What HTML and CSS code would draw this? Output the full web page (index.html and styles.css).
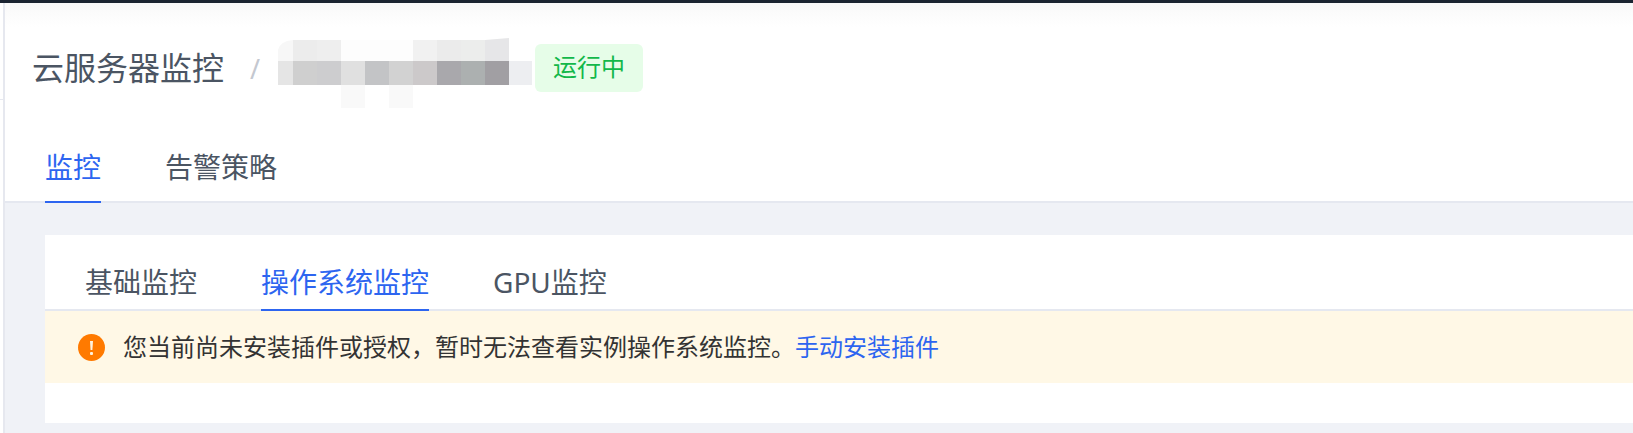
FILE: index.html
```html
<!DOCTYPE html>
<html lang="zh-CN">
<head>
    <meta charset="UTF-8">
    <title>云服务器监控</title>
    <link rel="stylesheet" href="styles.css">
</head>
<body>
    <div class="topbar"></div>
    <div class="layout">
        <div class="sidebar"><div class="sidebar-line"></div></div>
        <div class="main">
            <div class="header">
                <div class="title-row">
                    <span class="title">云服务器监控</span>
                    <span class="slash">/</span>
                    <!-- blurred instance name -->
                    <svg class="mosaic" width="254" height="70" viewBox="0 0 254 70">
                        <path d="M0 23V12Q2 3 15 2V23Z" fill="#f7f7f7"/>
                        <rect x="15" y="2" width="24" height="21" fill="#ececec"/>
                        <rect x="39" y="2" width="24" height="21" fill="#eeeeee"/>
                        <rect x="63" y="2" width="72" height="21" fill="#fdfdfd"/>
                        <rect x="135" y="2" width="24" height="21" fill="#f1f1f1"/>
                        <rect x="159" y="2" width="24" height="21" fill="#ebebeb"/>
                        <rect x="183" y="2" width="24" height="21" fill="#ecedec"/>
                        <path d="M207 2L231 0V23H207Z" fill="#e6e6e8"/>
                        <rect x="0" y="23" width="15" height="24" fill="#e5e5e5"/>
                        <rect x="15" y="23" width="24" height="24" fill="#cfcfcf"/>
                        <rect x="39" y="23" width="24" height="24" fill="#cdcdcf"/>
                        <rect x="63" y="23" width="24" height="24" fill="#e0e0e0"/>
                        <rect x="87" y="23" width="24" height="24" fill="#c3c4c6"/>
                        <rect x="111" y="23" width="24" height="24" fill="#d2d2d2"/>
                        <rect x="135" y="23" width="24" height="24" fill="#ccc9ca"/>
                        <rect x="159" y="23" width="24" height="24" fill="#a9a8ac"/>
                        <rect x="183" y="23" width="24" height="24" fill="#acb0b0"/>
                        <rect x="207" y="23" width="24" height="24" fill="#a19fa3"/>
                        <rect x="231" y="23" width="23" height="24" fill="#edeef1"/>
                        <rect x="63" y="47" width="24" height="23" fill="#f9f9f9"/>
                        <rect x="111" y="47" width="24" height="23" fill="#f9f9f9"/>
                    </svg>
                    <span class="badge">运行中</span>
                </div>
                <div class="tabs page-tabs">
                    <a class="tab active">监控</a>
                    <a class="tab">告警策略</a>
                </div>
            </div>
            <div class="content">
                <div class="card">
                    <div class="tabs card-tabs">
                        <a class="tab">基础监控</a>
                        <a class="tab active">操作系统监控</a>
                        <a class="tab">GPU监控</a>
                    </div>
                    <div class="alert">
                        <svg class="alert-icon" width="27" height="27" viewBox="0 0 27 27">
                            <circle cx="13.5" cy="13.5" r="13.5" fill="#ff7a00"/>
                            <path d="M12 7H15L14.4 16H12.6Z" fill="#fff3e0"/>
                            <rect x="12" y="18" width="3" height="3" rx="1" fill="#fff3e0"/>
                        </svg>
                        <span class="alert-text">您当前尚未安装插件或授权，暂时无法查看实例操作系统监控。<a class="link">手动安装插件</a></span>
                    </div>
                </div>
            </div>
        </div>
    </div>
</body>
</html>
```

FILE: styles.css
```css
* {
    box-sizing: border-box;
}

html, body {
    height: 100%;
}

body {
    margin: 0;
    display: flex;
    flex-direction: column;
    overflow: hidden;
    background-color: #fff;
    font-family: "Noto Sans", "Noto Sans CJK SC", sans-serif;
}

.topbar {
    height: 3px;
    background-color: #1b2431;
}

.layout {
    flex: 1;
    display: flex;
}

.sidebar {
    width: 5px;
    border-right: 2px solid #e6e8ef;
    padding-top: 96px;
}

.sidebar-line {
    height: 1px;
    background-color: #e6e8ef;
}

.main {
    flex: 1;
    display: flex;
    flex-direction: column;
    background-color: #f0f2f7;
}

.header {
    height: 200px;
    background: linear-gradient(#f9f9f9, #fff 24px);
    border-bottom: 2px solid #e5e8f0;
}

.title-row {
    display: flex;
    align-items: center;
    height: 48px;
    margin-top: 41px;
    padding-left: 27px;
}

.title {
    font-size: 32px;
    line-height: 48px;
    color: #4b5563;
}

.slash {
    margin-left: 25px;
    width: 29px;
    padding-left: 1px;
    font-size: 27px;
    color: #c4c8d0;
}

.mosaic {
    flex-shrink: 0;
    margin-top: 10px;
}

.badge {
    margin-left: 3px;
    width: 108px;
    height: 48px;
    border-radius: 6px;
    background-color: #e6fde8;
    color: #12b84a;
    font-size: 24px;
    line-height: 46px;
    text-align: center;
}

.tabs {
    display: flex;
}

.tab {
    display: block;
    height: 100%;
    font-size: 28px;
    color: #4b5563;
    white-space: nowrap;
}

.tab.active {
    color: #2d65f0;
    border-bottom: 2px solid #2d65f0;
}

.page-tabs {
    gap: 64px;
    height: 61px;
    margin-top: 50px;
    margin-bottom: -2px;
    padding-left: 40px;
    position: relative;
}

.page-tabs .tab {
    line-height: 51px;
}

.content {
    flex: 1;
    padding: 32px 0 10px 40px;
}

.card {
    height: 188px;
    background-color: #fff;
}

.card-tabs {
    gap: 64px;
    height: 76px;
    padding-left: 40px;
    border-bottom: 2px solid #e5e8f0;
}

.card-tabs .tab {
    height: 76px;
    line-height: 94px;
}

.alert {
    display: flex;
    align-items: center;
    height: 72px;
    padding-left: 33px;
    background-color: #fff8e6;
    font-size: 24px;
    color: #333;
}

.alert-icon {
    margin-right: 18px;
    flex-shrink: 0;
}

.alert-text {
    line-height: 34px;
    padding-bottom: 1px;
}

.link {
    color: #2d65f0;
}
```
